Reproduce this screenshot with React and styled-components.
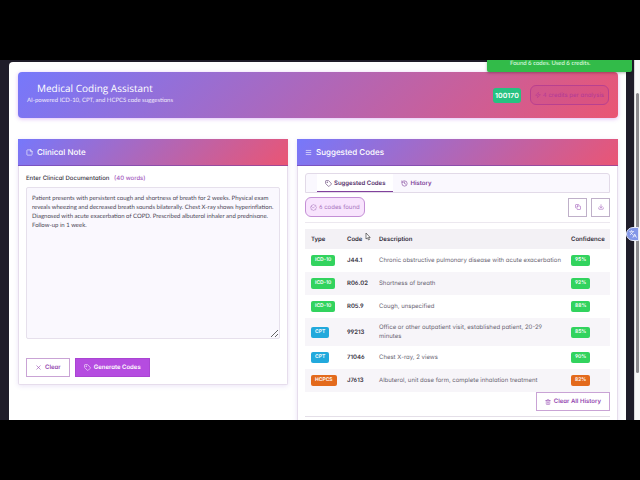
import React from 'react'
import styled, { createGlobalStyle, css } from 'styled-components'
import { Tag, X, Menu, History, BadgeCheck, Copy, Download, Trash2, Zap, StickyNote, Languages } from 'lucide-react'

const GlobalStyle = createGlobalStyle`
    * {
        box-sizing: border-box;
    }

    body {
        margin: 0;
        background: #000;
        color: #3b3745;
        font-family: Inter, "Noto Sans", sans-serif;
        font-feature-settings: "cv03", "cv04", "cv11";
        font-size: 6px;
        line-height: 9px;
        text-rendering: geometricPrecision;
    }

    button, textarea {
        font: inherit;
        font-feature-settings: inherit;
        text-rendering: inherit;
        margin: 0;
    }
`
const gradient = 'linear-gradient(135deg, #7678fb 0%, #ea5574 100%)'

const Page = styled.div`
    height: 100vh;
    padding: 60px 0;
`
const Screen = styled.div`
    position: relative;
    display: flex;
    height: 100%;
    overflow: hidden;
    background: #1f1c29;
`
const Main = styled.main`
    flex: 1;
    min-width: 0;
    margin: 2px 8px 0 9px;
    padding: 10px 8px 0 9px;
    background: #fff;
    border-radius: 4px 0 0 0;
`
const Banner = styled.header`
    display: flex;
    align-items: center;
    justify-content: space-between;
    height: 46px;
    padding: 0 9px;
    margin-bottom: 21px;
    color: #fff;
    background: ${gradient};
    border-radius: 4px;
    box-shadow: 0 1px 4px rgba(170, 70, 230, 0.35);
`
const Title = styled.h1`
    margin: 0;
    padding-left: 10px;
    font-family: "Open Sans", sans-serif;
    font-size: 10px;
    font-weight: 500;
    line-height: 16px;
`
const Subtitle = styled.p`
    margin: 0 0 5px;
    font-family: Lato, sans-serif;
    color: #f0e8fb;
`
const Credits = styled.div`
    display: flex;
    align-items: center;
    gap: 9px;
`
const Balance = styled.span`
    padding: 3px 2px;
    font-size: 7px;
    font-weight: 600;
    background: #26c281;
    border-radius: 3px;
`
const Chip = styled.span`
    display: inline-flex;
    align-items: center;
    gap: 2px;
    height: 20px;
    padding: 0 4px;
    color: #a975bd;
    background: #f8e4fd;
    border: 1px solid #c48fd6;
    border-radius: 6px;

    ${(props) => props.$faded && css`
        color: #b23a98;
        background: rgba(180, 60, 150, 0.16);
        border-color: #b9408f;
    `}
`
const Columns = styled.div`
    display: grid;
    grid-template-columns: 270fr 321fr;
    align-items: start;
    gap: 9px;
`
const Panel = styled.section`
    min-width: 0;
    background: #fff;
    border: 1px solid #e6ddec;
    border-top: 0;
    border-radius: 0 0 2px 2px;
    box-shadow: 0 1px 5px rgba(130, 90, 200, 0.16);
`
const PanelHeader = styled.h2`
    display: flex;
    align-items: center;
    gap: 4px;
    height: 27px;
    margin: 0 -1px;
    padding: 0 8px;
    color: #fff;
    background: ${gradient};
    border-bottom: 1px solid rgba(120, 60, 160, 0.6);
    font-size: 8px;
    font-weight: 500;
`
const PanelBody = styled.div`
    padding: 7px;
`
const Label = styled.label`
    display: block;
    padding-top: 1px;
    margin-bottom: 4px;
    font-weight: 500;

    span {
        margin-left: 3px;
        color: #a65cc0;
    }
`
const NoteInput = styled.textarea`
    display: block;
    width: 100%;
    height: 152px;
    padding: 6px 5px;
    color: #4b4655;
    font-family: Lato, sans-serif;
    background: #faf8fe;
    border: 1px solid #e6e0ec;
    border-radius: 2px;
    outline: none;
    resize: vertical;
`
const Actions = styled.div`
    display: flex;
    justify-content: ${(props) => (props.$end ? 'flex-end' : 'flex-start')};
    gap: ${(props) => (props.$tight ? '4px' : '5px')};
`
const NoteActions = styled(Actions)`
    padding-top: 19px;
`
const Button = styled.button`
    display: inline-flex;
    align-items: center;
    justify-content: center;
    gap: 3px;
    height: 19px;
    padding: 0 8px;
    color: #9448b0;
    background: #fff;
    border: 1px solid #c9a3d5;
    font-weight: 600;

    ${(props) => props.$primary && css`
        color: #fff;
        background: #b54ce0;
        border-color: #a944d2;
    `}

    ${(props) => props.$square && css`
        width: 19px;
        padding: 0;
        border-color: #bfb0c9;
    `}
`
const Tabs = styled.div`
    display: flex;
    height: 20px;
    padding: 0 11px;
    background: #faf8fe;
    border: 1px solid #e2dae8;
    border-radius: 3px 3px 0 0;
`
const Tab = styled.button`
    display: flex;
    align-items: center;
    gap: 2px;
    padding: 1px 8px 0;
    color: ${(props) => (props.$active ? '#55306b' : '#7d3f98')};
    background: ${(props) => (props.$active ? '#fff' : 'transparent')};
    border: 0;
    border-bottom: 1px solid ${(props) => (props.$active ? '#81419c' : 'transparent')};
    font-weight: 600;
`
const Summary = styled.div`
    display: flex;
    align-items: center;
    justify-content: space-between;
    padding: 4px 0 5px;
    margin-bottom: 6px;
    border-bottom: 1px solid #ece8ef;
`
const CodeTable = styled.table`
    width: 100%;
    border-collapse: collapse;
    table-layout: fixed;

    th, td {
        height: 23px;
        padding: 0 0 0 6px;
        text-align: left;
    }

    th {
        height: 20px;
        color: #2e2a38;
        background: #f3f1f5;
        font-weight: 600;
    }

    td {
        color: #6a6573;
    }

    tbody tr:nth-child(even) {
        background: #f7f5f9;
    }

    td.code {
        color: #37333f;
        font-weight: 600;
    }

    td.wrap {
        padding: 5px 6px;
    }
`
const badgeColors = {
    green: '#32d35e',
    blue: '#22a9dc',
    orange: '#e36a1c',
}
const Badge = styled.span`
    display: inline-block;
    padding: 1px 4px;
    color: #fff;
    background: ${(props) => badgeColors[props.$color]};
    border-radius: 2px;
    font-size: 5px;
    font-weight: 600;
    vertical-align: middle;
    white-space: nowrap;
`
const Footer = styled.div`
    padding-bottom: 5px;
    border-bottom: 1px solid #e4dfe8;
`
const Toast = styled.div`
    position: absolute;
    top: 0;
    right: 8px;
    width: 145px;
    height: 12px;
    padding-left: 23px;
    color: #e2ffe6;
    background: #32bb49;
    border-radius: 0 0 2px 2px;
    box-shadow: 0 1px 3px rgba(0, 0, 0, 0.3);
    font-family: Lato, sans-serif;
    line-height: 7px;
`
const Scrollbar = styled.div`
    width: 6px;
    padding: 33px 1px 47px;
    background: #f8f8f8;
    border-left: 1px solid #d8d8da;
`
const Thumb = styled.div`
    height: 100%;
    background: #8d8b8f;
    border-radius: 2px;
`
const SideBadge = styled.button`
    position: absolute;
    top: 167px;
    right: 1px;
    display: flex;
    align-items: center;
    justify-content: center;
    width: 13px;
    height: 14px;
    padding: 0;
    color: #fff;
    background: #8397e8;
    border: 1px solid #e4e8fa;
    border-radius: 7px 0 0 7px;
`
const Pointer = styled.svg`
    position: absolute;
    top: 172px;
    left: 365px;
`

const codes = [
    { type: 'ICD-10', color: 'green', code: 'J44.1', text: 'Chronic obstructive pulmonary disease with acute exacerbation', score: '95%' },
    { type: 'ICD-10', color: 'green', code: 'R06.02', text: 'Shortness of breath', score: '92%' },
    { type: 'ICD-10', color: 'green', code: 'R05.9', text: 'Cough, unspecified', score: '88%' },
    { type: 'CPT', color: 'blue', code: '99213', text: 'Office or other outpatient visit, established patient, 20-29 minutes', score: '85%', wrap: true },
    { type: 'CPT', color: 'blue', code: '71046', text: 'Chest X-ray, 2 views', score: '90%' },
    { type: 'HCPCS', color: 'orange', code: 'J7613', text: 'Albuterol, unit dose form, complete inhalation treatment', score: '82%', low: true },
]

const note = 'Patient presents with persistent cough and shortness of breath for 2 weeks. Physical exam reveals wheezing and decreased breath sounds bilaterally. Chest X-ray shows hyperinflation. Diagnosed with acute exacerbation of COPD. Prescribed albuterol inhaler and prednisone. Follow-up in 1 week.'

const ClinicalNote = () => (
    <Panel>
        <PanelHeader><StickyNote size={7} />Clinical Note</PanelHeader>
        <PanelBody>
            <Label htmlFor="note">Enter Clinical Documentation <span>(40 words)</span></Label>
            <NoteInput id="note" defaultValue={note} spellCheck={false} />
            <NoteActions>
                <Button type="button"><X size={7} />Clear</Button>
                <Button type="button" $primary><Tag size={7} />Generate Codes</Button>
            </NoteActions>
        </PanelBody>
    </Panel>
)

const SuggestedCodes = () => (
    <Panel>
        <PanelHeader><Menu size={7} />Suggested Codes</PanelHeader>
        <PanelBody>
            <Tabs role="tablist">
                <Tab type="button" role="tab" aria-selected="true" $active><Tag size={7} />Suggested Codes</Tab>
                <Tab type="button" role="tab" aria-selected="false"><History size={7} />History</Tab>
            </Tabs>
            <Summary>
                <Chip><BadgeCheck size={7} />6 codes found</Chip>
                <Actions $tight>
                    <Button type="button" aria-label="Copy" $square><Copy size={6} /></Button>
                    <Button type="button" aria-label="Download" $square><Download size={6} /></Button>
                </Actions>
            </Summary>
            <CodeTable>
                <colgroup>
                    <col width="36" />
                    <col width="32" />
                    <col />
                    <col width="45" />
                </colgroup>
                <thead>
                    <tr>
                        <th>Type</th>
                        <th>Code</th>
                        <th>Description</th>
                        <th>Confidence</th>
                    </tr>
                </thead>
                <tbody>
                    {codes.map((item) => (
                        <tr key={item.code}>
                            <td><Badge $color={item.color}>{item.type}</Badge></td>
                            <td className="code">{item.code}</td>
                            <td className={item.wrap ? 'wrap' : undefined}>{item.text}</td>
                            <td><Badge $color={item.low ? 'orange' : 'green'}>{item.score}</Badge></td>
                        </tr>
                    ))}
                </tbody>
            </CodeTable>
            <Footer>
                <Actions $end>
                    <Button type="button"><Trash2 size={6} />Clear All History</Button>
                </Actions>
            </Footer>
        </PanelBody>
    </Panel>
)

const App = () => {
    return (
        <Page>
            <GlobalStyle />
            <Screen>
                <Main>
                    <Banner>
                        <div>
                            <Title>Medical Coding Assistant</Title>
                            <Subtitle>AI-powered ICD-10, CPT, and HCPCS code suggestions</Subtitle>
                        </div>
                        <Credits>
                            <Balance>100170</Balance>
                            <Chip $faded><Zap size={6} />4 credits per analysis</Chip>
                        </Credits>
                    </Banner>
                    <Columns>
                        <ClinicalNote />
                        <SuggestedCodes />
                    </Columns>
                </Main>
                <Scrollbar><Thumb /></Scrollbar>
                <Toast role="status">Found 6 codes. Used 6 credits.</Toast>
                <SideBadge type="button" aria-label="Translate"><Languages size={8} /></SideBadge>
                <Pointer width="6" height="9" viewBox="0 0 6 9">
                    <path d="M1 1v6l1.5-1.2 1 2.2 1-.5-1-2h1.7z" fill="#fff" stroke="#444" strokeWidth="0.7" />
                </Pointer>
            </Screen>
        </Page>
    )
}

export default App
